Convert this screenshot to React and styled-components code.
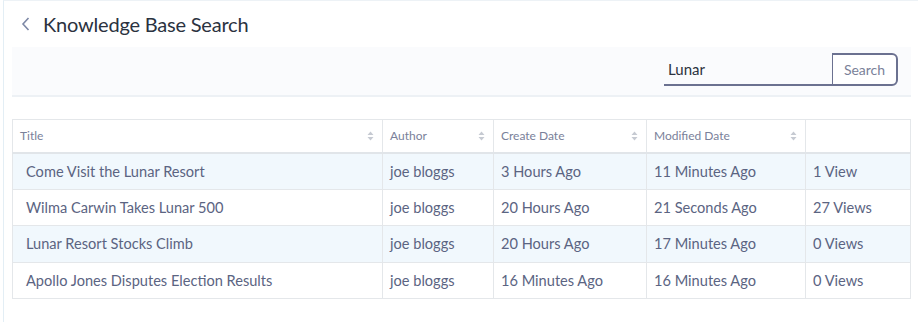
import React from 'react';
import styled, { createGlobalStyle } from 'styled-components';

const GlobalStyle = createGlobalStyle`
  html, body {
    margin: 0;
    padding: 0;
    background: #ffffff;
    font-family: Lato, "Open Sans", sans-serif;
  }
`;

const Page = styled.div`
  margin-left: 3px;
  width: 915px;
  height: 322px;
  box-sizing: border-box;
  border-left: 1px solid #e3eef5;
  border-top: 1px solid #edf2f6;
  padding: 0 7px 0 8px;
`;

const Header = styled.div`
  display: flex;
  align-items: center;
  gap: 10px;
  height: 46px;
  padding-left: 7px;
`;

const BackButton = styled.button`
  display: flex;
  align-items: center;
  justify-content: center;
  width: 14px;
  height: 20px;
  padding: 0;
  border: none;
  background: transparent;
  color: #7d88a6;
  cursor: pointer;
`;

const PageTitle = styled.h1`
  margin: 0;
  font-size: 20px;
  font-weight: 400;
  color: #2b3240;
  letter-spacing: -0.2px;
`;

const Toolbar = styled.div`
  display: flex;
  justify-content: flex-end;
  align-items: flex-start;
  height: 50px;
  box-sizing: border-box;
  padding: 6px 13px 0 0;
  background: #fafbfd;
  border-bottom: 2px solid #edf1f5;
`;

const SearchInput = styled.input`
  width: 168px;
  height: 33px;
  box-sizing: border-box;
  border: none;
  border-bottom: 2px solid #6b7190;
  background: transparent;
  padding: 0 4px 0;
  font-family: inherit;
  font-size: 15px;
  color: #2b3240;
  outline: none;
`;

const SearchButton = styled.button`
  height: 33px;
  width: 66px;
  box-sizing: border-box;
  border: 2px solid #6b7190;
  border-left-width: 1px;
  border-radius: 0 6px 6px 0;
  background: #ffffff;
  font-family: inherit;
  font-size: 14px;
  color: #7a8199;
  cursor: pointer;
`;

const Table = styled.table`
  margin-top: 22px;
  width: 898px;
  border-collapse: collapse;
  table-layout: fixed;
  border: 1px solid #e4e7ea;
`;

const HeadCell = styled.th`
  box-sizing: border-box;
  width: ${p => p.w}px;
  height: 33px;
  padding: 0 8px 0 7px;
  border: 1px solid #e4e7ea;
  border-bottom: 2px solid #e1e5e9;
  text-align: left;
  font-size: 12px;
  font-weight: 400;
  color: #7a819a;
  background: #ffffff;
`;

const HeadInner = styled.div`
  display: flex;
  align-items: center;
  justify-content: space-between;
`;

const SortIcon = () => (
  <svg width="7" height="10" viewBox="0 0 7 10">
    <path d="M3.5 0.5 L6.5 4 H0.5 Z M3.5 9.5 L6.5 6 H0.5 Z" fill="#c6cad2" />
  </svg>
);

const Row = styled.tr`
  background: ${p => (p.striped ? '#f1f8fd' : '#ffffff')};
`;

const Cell = styled.td`
  box-sizing: border-box;
  height: 36.6px;
  padding: 0 8px 0 ${p => (p.first ? 13 : 7)}px;
  border: 1px solid #e4e7ea;
  font-size: 14.6px;
  color: #5b6482;
  white-space: nowrap;
  overflow: hidden;
`;

const columns = [
  { label: 'Title', w: 370, sort: true },
  { label: 'Author', w: 111, sort: true },
  { label: 'Create Date', w: 153, sort: true },
  { label: 'Modified Date', w: 159, sort: true },
  { label: '', w: 105, sort: false },
];

const articles = [
  ['Come Visit the Lunar Resort', 'joe bloggs', '3 Hours Ago', '11 Minutes Ago', '1 View'],
  ['Wilma Carwin Takes Lunar 500', 'joe bloggs', '20 Hours Ago', '21 Seconds Ago', '27 Views'],
  ['Lunar Resort Stocks Climb', 'joe bloggs', '20 Hours Ago', '17 Minutes Ago', '0 Views'],
  ['Apollo Jones Disputes Election Results', 'joe bloggs', '16 Minutes Ago', '16 Minutes Ago', '0 Views'],
];

export default function App() {
  return (
    <>
      <GlobalStyle />
      <Page>
        <Header>
          <BackButton aria-label="Back">
            <svg width="10" height="16" viewBox="0 0 10 16">
              <path d="M7.5 2 L2 8 L7.5 14" fill="none" stroke="currentColor" strokeWidth="1.6" />
            </svg>
          </BackButton>
          <PageTitle>Knowledge Base Search</PageTitle>
        </Header>
        <Toolbar>
          <SearchInput defaultValue="Lunar" />
          <SearchButton>Search</SearchButton>
        </Toolbar>
        <Table>
          <thead>
            <tr>
              {columns.map((c, i) => (
                <HeadCell key={i} w={c.w}>
                  <HeadInner>
                    <span>{c.label}</span>
                    {c.sort && <SortIcon />}
                  </HeadInner>
                </HeadCell>
              ))}
            </tr>
          </thead>
          <tbody>
            {articles.map((row, i) => (
              <Row key={i} striped={i % 2 === 0}>
                {row.map((v, j) => (
                  <Cell key={j} first={j === 0}>{v}</Cell>
                ))}
              </Row>
            ))}
          </tbody>
        </Table>
      </Page>
    </>
  );
}
